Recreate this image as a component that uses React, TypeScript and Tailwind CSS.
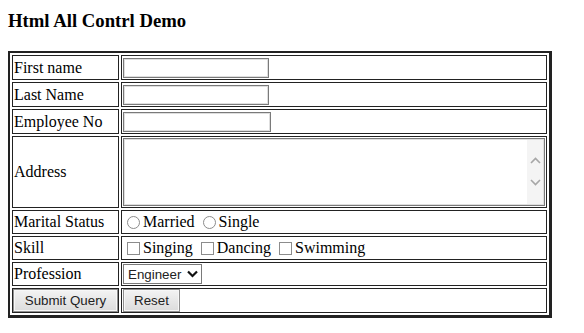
import { useState } from 'react';

const labelCell = "border border-[#222] p-px flex items-center text-[16px] leading-[18px]";
const valueCell = "border border-[#222] p-px flex items-center";

const App = () => {
  const [marital, setMarital] = useState('');

  return (
    <div className="min-h-screen bg-white p-2 text-black font-['Liberation_Serif','Times_New_Roman',serif]">
      <h3 className="text-[18.72px] font-bold leading-[22px] mt-[2px] mb-[19px]">Html All Contrl Demo</h3>

      <div className="w-[544px] border-t-2 border-l-2 border-r-[3px] border-b-[3px] border-[#222] p-[2px] grid grid-cols-[107px_426px] grid-rows-[25px_25px_25px_72px_24px_24px_24px_25px] gap-[2px]">
        <div className={labelCell}>First name</div>
        <div className={valueCell}>
          <input type="text" className="w-[146px] h-[20px] border border-[#7a7a7a] shadow-[inset_0_0_0_1px_#dedede] outline-none px-[2px] text-[13px]" />
        </div>

        <div className={labelCell}>Last Name</div>
        <div className={valueCell}>
          <input type="text" className="w-[146px] h-[20px] border border-[#7a7a7a] shadow-[inset_0_0_0_1px_#dedede] outline-none px-[2px] text-[13px]" />
        </div>

        <div className={labelCell}>Employee No</div>
        <div className={valueCell}>
          <input type="text" className="w-[148px] h-[20px] border border-[#7a7a7a] shadow-[inset_0_0_0_1px_#dedede] outline-none px-[2px] text-[13px]" />
        </div>

        <div className={labelCell}>Address</div>
        <div className={valueCell}>
          <div className="w-full h-full flex border border-[#7a7a7a] shadow-[inset_0_0_0_1px_#dedede] p-px">
            <textarea className="flex-1 resize-none outline-none text-[13px] bg-white" />
            <div className="w-[16px] bg-[#f4f4f4] flex flex-col items-center pt-[17px] gap-[15px]">
              <svg width="11" height="7" viewBox="0 0 11 7">
                <path d="M1 6 L5.5 1.5 L10 6" fill="none" stroke="#a6a6a6" strokeWidth="1.6" />
              </svg>
              <svg width="11" height="7" viewBox="0 0 11 7">
                <path d="M1 1 L5.5 5.5 L10 1" fill="none" stroke="#a6a6a6" strokeWidth="1.6" />
              </svg>
            </div>
          </div>
        </div>

        <div className={labelCell}>Marital Status</div>
        <div className={`${valueCell} text-[16px]`}>
          <input type="radio" name="marital" checked={marital === 'm'} onChange={() => setMarital('m')}
            className="appearance-none m-0 ml-[4px] mr-[3px] w-[13px] h-[13px] rounded-full border border-[#8c8c8c] bg-white checked:bg-[#555]" />
          <span>Married</span>
          <input type="radio" name="marital" checked={marital === 's'} onChange={() => setMarital('s')}
            className="appearance-none m-0 ml-[8px] mr-[3px] w-[13px] h-[13px] rounded-full border border-[#8c8c8c] bg-white checked:bg-[#555]" />
          <span>Single</span>
        </div>

        <div className={labelCell}>Skill</div>
        <div className={`${valueCell} text-[16px]`}>
          <input type="checkbox" className="appearance-none m-0 ml-[4px] mr-[3px] w-[13px] h-[13px] border border-[#8c8c8c] bg-white checked:bg-[#555]" />
          <span>Singing</span>
          <input type="checkbox" className="appearance-none m-0 ml-[8px] mr-[3px] w-[13px] h-[13px] border border-[#8c8c8c] bg-white checked:bg-[#555]" />
          <span>Dancing</span>
          <input type="checkbox" className="appearance-none m-0 ml-[8px] mr-[3px] w-[13px] h-[13px] border border-[#8c8c8c] bg-white checked:bg-[#555]" />
          <span>Swimming</span>
        </div>

        <div className={labelCell}>Profession</div>
        <div className={valueCell}>
          <div className="relative w-[79px] h-[20px] border border-[#7a7a7a] bg-white flex items-center">
            <select className="appearance-none w-full h-full pl-[4px] bg-transparent outline-none text-[13.33px] text-[#222] font-['Liberation_Sans',Arial,sans-serif]">
              <option>Engineer</option>
              <option>Doctor</option>
              <option>Teacher</option>
            </select>
            <svg className="absolute right-[3px] top-[5px] pointer-events-none" width="11" height="8" viewBox="0 0 11 8">
              <path d="M1 1.5 L5.5 6 L10 1.5" fill="none" stroke="#111" strokeWidth="2.2" />
            </svg>
          </div>
        </div>

        <div className="border border-[#222] p-0 flex items-center">
          <button className="w-full h-[23px] border border-[#8f8f8f] shadow-[inset_0_0_0_1px_#f7f7f7] bg-gradient-to-b from-[#f3f3f3] to-[#dcdcdc] text-[13.33px] text-[#222] font-['Liberation_Sans',Arial,sans-serif]">
            Submit Query
          </button>
        </div>
        <div className={valueCell}>
          <button className="w-[57px] h-[23px] border border-[#8f8f8f] shadow-[inset_0_0_0_1px_#f7f7f7] bg-gradient-to-b from-[#f3f3f3] to-[#dcdcdc] text-[13.33px] text-[#222] font-['Liberation_Sans',Arial,sans-serif]">
            Reset
          </button>
        </div>
      </div>
    </div>
  );
};

export default App;
